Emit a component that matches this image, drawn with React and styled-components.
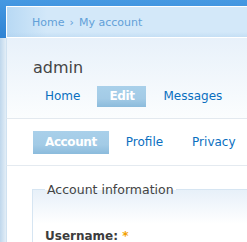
import styled, { createGlobalStyle } from "styled-components";

const GlobalStyle = createGlobalStyle`
	html, body {
		margin: 0;
		padding: 0;
		background: #fff;
		overflow: hidden;
	}
	body {
		font-family: "DejaVu Sans", Verdana, sans-serif;
	}
`;

const tabs = ["Home", "Edit", "Messages"];
const subTabs = ["Account", "Profile", "Privacy"];

const App = () => {
	return (
		<>
			<GlobalStyle />
			<Page>
				<Panel>
					<Breadcrumb>
						<a href="#">Home</a>
						<span className="sep">›</span>
						<a href="#">My account</a>
					</Breadcrumb>
					<Header>
						<Title>admin</Title>
						<TabRow>
							{tabs.map((t) => (
								<Tab key={t} $active={t === "Edit"}>
									{t}
								</Tab>
							))}
						</TabRow>
					</Header>
					<SubTabBar>
						<TabRow>
							{subTabs.map((t) => (
								<SubTab key={t} $active={t === "Account"}>
									{t}
								</SubTab>
							))}
						</TabRow>
					</SubTabBar>
					<Content>
						<Fieldset>
							<legend>Account information</legend>
							<Label>
								Username: <span className="req">*</span>
							</Label>
						</Fieldset>
					</Content>
				</Panel>
			</Page>
		</>
	);
};

const Page = styled.div`
	height: 242px;
	overflow: hidden;
	padding: 6px 0 0 6px;
	box-sizing: border-box;
	background:
		linear-gradient(180deg, #4699e2 0px, #2f83d4 38px) 0 0 / 100% 38px no-repeat,
		linear-gradient(90deg, #bfd7ec 0px, #e3eef7 6px) 0 38px / 6px 100% no-repeat,
		#fff;
`;

const Panel = styled.div`
	border-top: 1px solid #fff;
`;

const Breadcrumb = styled.div`
	height: 30px;
	display: flex;
	align-items: center;
	gap: 5px;
	padding-left: 25px;
	font-size: 11px;
	border-left: 1px solid #fff;
	border-bottom: 1px solid #fff;
	background:
		linear-gradient(180deg, rgba(255, 255, 255, 0) 0px, rgba(255, 255, 255, 0) 25px, rgba(170, 205, 235, 0.35) 30px),
		linear-gradient(90deg, #b8d9f4 0px, #d3e8f9 40px);

	a {
		color: #62a0d8;
		text-decoration: none;
	}

	.sep {
		color: #62a0d8;
	}
`;

const Header = styled.div`
	padding: 20px 0 11px 26px;
	border-left: 1px solid #d0e2f1;
	border-bottom: 1px solid #e3e9ef;
	background: linear-gradient(180deg, #e8f1fa 0%, #fbfdfe 100%);
`;

const Title = styled.h2`
	margin: 0 0 8px;
	font-size: 16px;
	line-height: 20px;
	font-weight: normal;
	color: #444;
`;

const TabRow = styled.div`
	display: flex;
	gap: 5px;
`;

const Tab = styled.a`
	display: block;
	padding: 0 12px;
	height: 21px;
	line-height: 21px;
	font-size: 12px;
	white-space: nowrap;
	font-weight: ${(p) => (p.$active ? "bold" : "normal")};
	letter-spacing: ${(p) => (p.$active ? "-0.4px" : "0")};
	color: ${(p) => (p.$active ? "#fff" : "#0a6fbf")};
	background: ${(p) =>
		p.$active ? "linear-gradient(180deg, #a9d0ea 0%, #a3cbe6 60%, #8bbbdc 100%)" : "none"};
`;

const SubTabBar = styled.div`
	padding: 12px 0 11px 26px;
	border-left: 1px solid #d0e2f1;
	border-bottom: 1px solid #e4eaf0;
	background: #fff;
`;

const SubTab = styled(Tab)`
	height: 23px;
	line-height: 23px;
`;

const Content = styled.div`
	padding: 16px 0 0 25px;
	border-left: 1px solid #d0e2f1;
	background: #fff;
	min-height: 80px;
`;

const Fieldset = styled.fieldset`
	margin: 0;
	padding: 32px 0 10px 12px;
	border: 1px solid #d6e5f2;
	border-right: none;
	background: linear-gradient(180deg, #e7f0f9 0px, #fff 34px);

	legend {
		padding: 0 2px;
		font-size: 12.5px;
		line-height: 15px;
		color: #444;
	}
`;

const Label = styled.div`
	font-size: 12px;
	font-weight: bold;
	color: #3c3c3c;

	.req {
		color: #f2a000;
		font-weight: bold;
	}
`;

export default App;
